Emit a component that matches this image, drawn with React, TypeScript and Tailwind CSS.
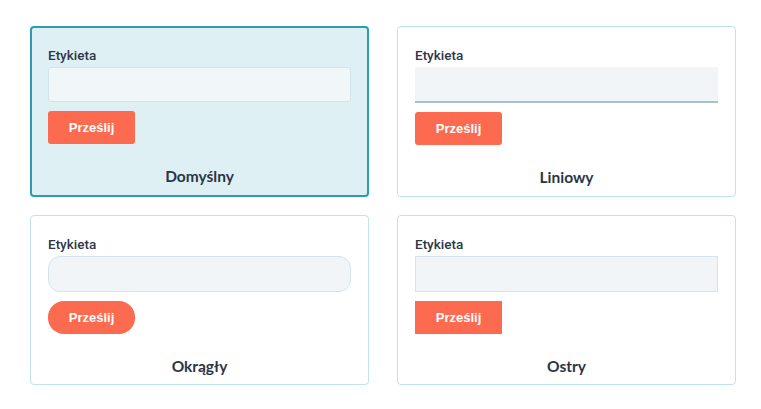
import { useState } from 'react';

type Variant = {
  name: string;
  card: string;
  input: string;
  button: string;
};

const variants: Variant[] = [
  {
    name: 'Domyślny',
    card: 'border-2 border-[#2f9bb2] bg-[#dff0f5] px-[16px] pt-[19px] pb-[9px]',
    input: 'h-[35px] rounded-[3px] border border-[#d5e2e9] bg-[#f1f6f9]',
    button: 'rounded-[3px]',
  },
  {
    name: 'Liniowy',
    card: 'border border-[#bfe4ec] bg-white px-[17px] pt-[20px] pb-[8px]',
    input: 'h-[36px] border-b-2 border-[#a9bfd0] bg-[#f1f5f8]',
    button: 'rounded-[3px]',
  },
  {
    name: 'Okrągły',
    card: 'border border-[#bfe4ec] bg-white px-[17px] pt-[20px] pb-[8px]',
    input: 'h-[36px] rounded-[12px] border border-[#d8e2ea] bg-[#f1f5f8]',
    button: 'rounded-[16px]',
  },
  {
    name: 'Ostry',
    card: 'border border-[#bfe4ec] bg-white px-[17px] pt-[20px] pb-[8px]',
    input: 'h-[36px] border border-[#d8e2ea] bg-[#f1f5f8]',
    button: 'rounded-none',
  },
];

const FieldCard = ({ variant }: { variant: Variant }) => {
  const [value, setValue] = useState('');

  return (
    <div className={`flex flex-col rounded-[4px] ${variant.card}`}>
      <label className="mb-[3px] block text-[13.5px] leading-[17px] font-medium text-[#2d3748] [font-family:Roboto,'Liberation_Sans',sans-serif]">
        Etykieta
      </label>
      <input
        value={value}
        onChange={(e) => setValue(e.target.value)}
        className={`w-full px-3 text-sm outline-none ${variant.input}`}
      />
      <button
        className={`mt-[9px] h-[33px] w-[87px] bg-[#fc6a50] text-[13px] font-bold text-white [font-family:'Liberation_Sans',Arial,sans-serif] ${variant.button}`}
      >
        Prześlij
      </button>
      <div className="mt-[22px] text-center text-[15.5px] leading-[20px] font-bold text-[#2a3645] [font-family:Lato,'Noto_Sans',sans-serif]">
        {variant.name}
      </div>
    </div>
  );
};

export default function App() {
  return (
    <div className="min-h-screen bg-white pt-[26px] pl-[30px]">
      <div className="grid grid-cols-[339px_339px] gap-x-[28px] gap-y-[18px]">
        {variants.map((v) => (
          <FieldCard key={v.name} variant={v} />
        ))}
      </div>
    </div>
  );
}
